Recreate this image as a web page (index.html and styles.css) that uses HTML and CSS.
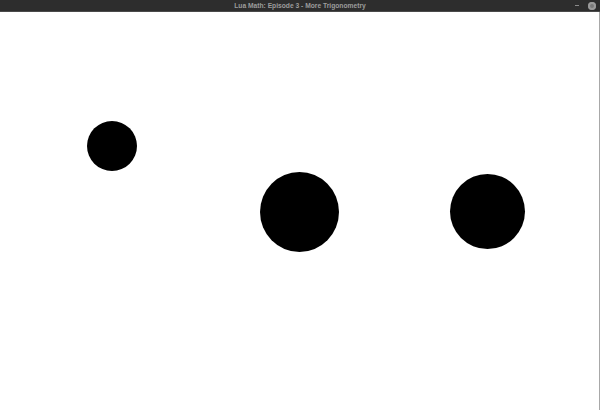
FILE: index.html
```html
<!DOCTYPE html>
<html>
<head>
<meta charset="utf-8">
<link rel="stylesheet" href="styles.css">
</head>
<body>
<div class="window">
  <div class="titlebar">
    <span class="title">Lua Math: Episode 3 - More Trigonometry</span>
    <div class="controls">
      <span class="minimize"></span>
      <span class="close"></span>
    </div>
  </div>
  <div class="canvas">
    <div class="ball ball-a"></div>
    <div class="ball ball-b"></div>
    <div class="ball ball-c"></div>
  </div>
</div>
</body>
</html>
```
FILE: styles.css
```css
html, body {
  margin: 0;
  padding: 0;
  background: #ffffff;
}
.window {
  width: 600px;
  height: 410px;
  display: flex;
  flex-direction: column;
  overflow: hidden;
}
.titlebar {
  height: 11px;
  flex: 0 0 11px;
  background: #2d2d2d;
  border-bottom: 1px solid #4a4a4a;
  position: relative;
  display: flex;
  align-items: center;
  justify-content: center;
}
.title {
  font-family: "Liberation Sans", Arial, sans-serif;
  font-weight: bold;
  font-size: 6.7px;
  color: #9c9c9c;
  line-height: 11px;
  white-space: nowrap;
}
.controls {
  position: absolute;
  right: 4px;
  top: 0;
  height: 11px;
  display: flex;
  align-items: center;
  gap: 9px;
}
.minimize {
  width: 4px;
  height: 1px;
  background: #8a8a8a;
}
.close {
  width: 8px;
  height: 8px;
  border-radius: 50%;
  background: #7a7a7a;
  box-shadow: inset 0 0 0 2px #9a9a9a;
}
.canvas {
  flex: 1;
  position: relative;
  background: #ffffff;
  border-right: 1px solid #a8a8a8;
}
.ball {
  position: absolute;
  border-radius: 50%;
  background: #000000;
}
.ball-a {
  left: 87px;
  top: 109px;
  width: 50px;
  height: 50px;
}
.ball-b {
  left: 260px;
  top: 160px;
  width: 79px;
  height: 80px;
}
.ball-c {
  left: 450px;
  top: 162px;
  width: 75px;
  height: 75px;
}
```
